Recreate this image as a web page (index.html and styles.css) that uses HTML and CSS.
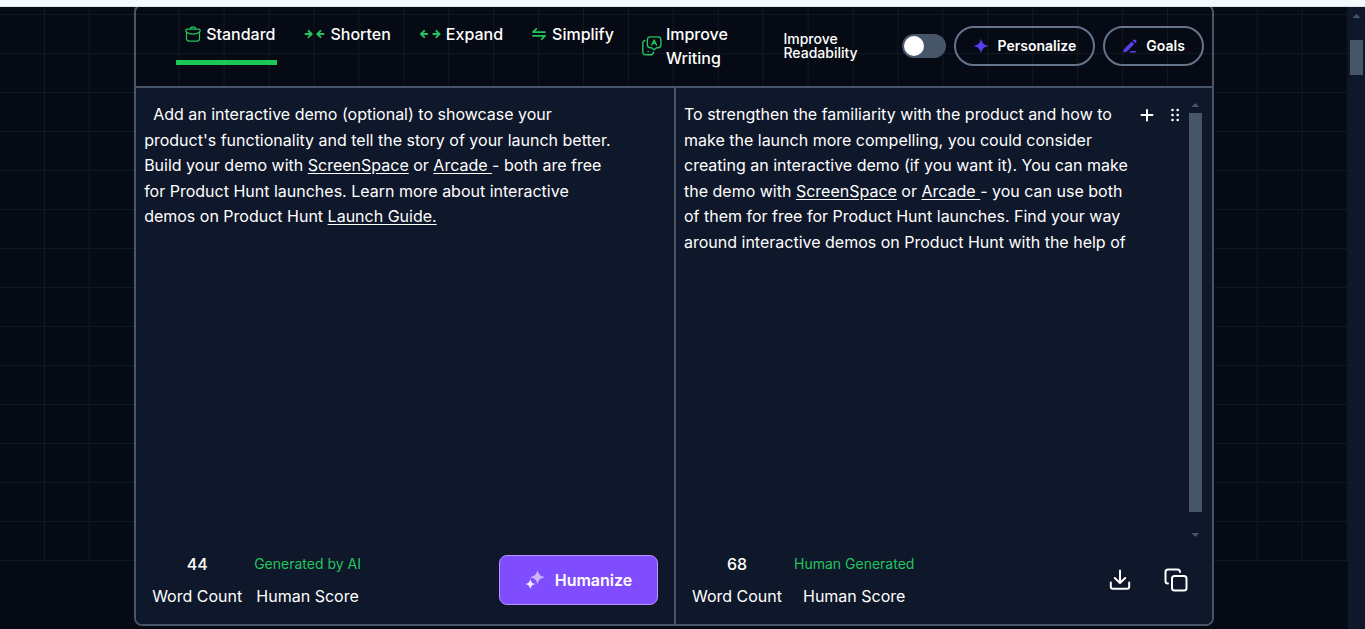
FILE: index.html
```html
<!DOCTYPE html>
<html lang="en">
<head>
<meta charset="utf-8">
<meta name="viewport" content="width=device-width, initial-scale=1">
<title>Humanize</title>
<link rel="stylesheet" href="styles.css">
</head>
<body>
<div class="top-strip"></div>
<div class="viewport">
  <main class="page">
    <section class="editor">
      <header class="toolbar">
        <nav class="tabs" aria-label="Rewrite mode">
          <button class="tab tab-active" type="button">
            <svg width="16" height="16" viewBox="0 0 16 16" fill="none" stroke="currentColor" stroke-width="1.2" stroke-linecap="round" stroke-linejoin="round"><path d="M5.400 3C5.400 1.400 6.300.8 8 .8s2.600.6 2.600 2.200"/><path d="M2.200 3.200h11.600c.9 0 1.400.5 1.400 1.300 0 .7-.3 1.200-.8 1.500C11.500 8.700 4.500 8.700 1.600 6 1.100 5.700.8 5.200.8 4.500c0-.8.500-1.300 1.400-1.300Z"/><path d="M1.500 6.300v6.100c0 1.800 1 2.700 2.900 2.700h7.200c1.900 0 2.900-.9 2.900-2.700V6.300"/></svg>
            <span>Standard</span>
          </button>
          <button class="tab" type="button">
            <svg width="21" height="10" viewBox="0 0 21 10" fill="none" stroke="currentColor" stroke-width="1.900" stroke-linecap="round" stroke-linejoin="round"><path d="M1.500 5h6M4.500 1.800 7.700 5 4.500 8.200M19.500 5h-6M16.500 1.800 13.300 5l3.200 3.200"/></svg>
            <span>Shorten</span>
          </button>
          <button class="tab" type="button">
            <svg width="21" height="10" viewBox="0 0 21 10" fill="none" stroke="currentColor" stroke-width="1.900" stroke-linecap="round" stroke-linejoin="round"><path d="M7.200 5h-6M4.200 1.800 1 5l3.200 3.200M13.300 5h6M16.300 1.800 19.500 5l-3.200 3.200"/></svg>
            <span>Expand</span>
          </button>
          <button class="tab tab-tight" type="button">
            <svg width="14" height="12" viewBox="0 0 14 12" fill="none" stroke="currentColor" stroke-width="1.700" stroke-linecap="round" stroke-linejoin="round"><path d="M4.300.9 1 4.100h12M9.700 11.100 13 7.900H1"/></svg>
            <span>Simplify</span>
          </button>
          <button class="tab tab-wrap" type="button">
            <svg width="20" height="20" viewBox="0 0 20 20" fill="none" stroke="currentColor" stroke-width="1.400" stroke-linecap="round" stroke-linejoin="round"><path d="M8.400.9h7.500c2 0 3 1 3 3v4.900c0 2-1 3-3 3h-1.300l-2.500 2-2.500-2H8.400c-2 0-3-1-3-3V3.900c0-2 1-3 3-3Z"/><path d="M3 4.600c-1.500.2-2.200 1.100-2.200 2.700v8.200c0 2.200 1 3.300 3.200 3.300h4.300c2 0 3-.8 3.200-2.500M6 15.700h.2"/><path d="m9.800 9 2.300-5 2.300 5M10.700 7.300h2.800"/></svg>
            <span>Improve<br>Writing</span>
          </button>
        </nav>
        <div class="controls">
          <label class="toggle-label" for="readability">Improve<br>Readability</label>
          <input class="toggle" id="readability" type="checkbox" role="switch">
          <button class="pill" type="button">
            <svg width="16" height="16" viewBox="0 0 16 16" fill="currentColor"><path d="M8 .3C8.900 5 10.500 7.100 15.700 8 10.500 8.900 8.900 11 8 15.700 7.100 11 5.500 8.900.3 8 5.500 7.100 7.100 5 8 .3Z"/></svg>
            <span>Personalize</span>
          </button>
          <button class="pill" type="button">
            <svg width="16" height="16" viewBox="0 0 16 16" fill="currentColor"><path d="M9.700 3.400 12.300 6 5.200 13.300c-.9.700-2.700 1.100-3.600 1.100-.3 0-.4-.2-.3-.5.200-1.300.6-2.700 1.300-3.500ZM10.600 2.500c1.200-1.300 2.300-1.400 3.300-.4s.9 2.100-.7 3.100ZM8.600 12.900h5c1 0 1 1.600 0 1.600H7.200Z"/></svg>
            <span>Goals</span>
          </button>
        </div>
      </header>
      <div class="panes">
        <section class="pane">
          <div class="content">
            <p class="copy copy-source">&nbsp;&nbsp;Add an interactive demo (optional) to showcase your product's functionality and tell the story of your launch better. Build your demo with <a href="#">ScreenSpace</a> or <a href="#">Arcade </a>- both are free for Product Hunt launches. Learn more about interactive demos on Product Hunt <a href="#">Launch Guide.</a></p>
          </div>
          <footer class="summary">
            <div class="stat"><span class="count">44</span><span>Word Count</span></div>
            <div class="stat"><span class="verdict">Generated by AI</span><span>Human Score</span></div>
            <button class="humanize" type="button">
              <svg width="20" height="20" viewBox="0 0 20 20" fill="currentColor"><path opacity=".65" d="M12.500 0c.9 4.400 2.700 6.200 7.500 7.200-4.800 1-6.600 2.800-7.500 7.300-.9-4.500-2.800-6.300-7.300-7.300C9.700 6.200 11.600 4.400 12.500 0Z"/><path d="M5.300 8.500c.6 3.600 1.800 4.900 5.500 5.600-3.700.7-4.900 2-5.500 5.500C4.700 16.100 3.500 14.800 0 14.100c3.500-.7 4.700-2 5.300-5.600Z"/></svg>
              <span>Humanize</span>
            </button>
          </footer>
        </section>
        <section class="pane">
          <div class="content">
            <p class="copy">To strengthen the familiarity with the product and how to make the launch more compelling, you could consider creating an interactive demo (if you want it). You can make the demo with <a href="#">ScreenSpace</a> or <a href="#">Arcade </a>- you can use both of them for free for Product Hunt launches. Find your way around interactive demos on Product Hunt with the help of</p>
            <div class="tools">
              <button class="icon-button" type="button" aria-label="Add">
                <svg width="14" height="14" viewBox="0 0 14 14" stroke="currentColor" stroke-width="2" stroke-linecap="round"><path d="M7 2v10.500M1.500 7h11"/></svg>
              </button>
              <button class="icon-button" type="button" aria-label="More">
                <svg width="14" height="14" viewBox="0 0 14 14" fill="currentColor"><circle cx="4.500" cy="2" r="1.300"/><circle cx="9.700" cy="2" r="1.300"/><circle cx="4.500" cy="7" r="1.300"/><circle cx="9.700" cy="7" r="1.300"/><circle cx="4.500" cy="12" r="1.300"/><circle cx="9.700" cy="12" r="1.300"/></svg>
              </button>
            </div>
            <div class="scroll" aria-hidden="true"><i class="arrow-up"></i><i class="thumb"></i><i class="arrow-down"></i></div>
          </div>
          <footer class="summary">
            <div class="stat"><span class="count">68</span><span>Word Count</span></div>
            <div class="stat"><span class="verdict">Human Generated</span><span>Human Score</span></div>
            <div class="actions">
              <button class="icon-button" type="button" aria-label="Download">
                <svg width="24" height="24" viewBox="0 0 24 24" fill="none" stroke="currentColor" stroke-width="2" stroke-linecap="round" stroke-linejoin="round"><path d="M2.800 14.500v4c0 1.600.7 2.200 2.200 2.200h14c1.500 0 2.200-.6 2.200-2.200v-4M12 2.500v12M6.800 10l5.200 5 5.200-5"/></svg>
              </button>
              <button class="icon-button" type="button" aria-label="Copy">
                <svg width="24" height="24" viewBox="0 0 24 24" fill="none" stroke="currentColor" stroke-width="2" stroke-linecap="round" stroke-linejoin="round"><rect x="8" y="8" width="14.500" height="14.500" rx="2.500"/><path d="M4 15.500c-1.500 0-2.500-1-2.500-2.500V4C1.500 2.500 2.500 1.500 4 1.500h9.500c1.500 0 2.500 1 2.500 2.500"/></svg>
              </button>
            </div>
          </footer>
        </section>
      </div>
    </section>
  </main>
  <div class="page-scroll" aria-hidden="true"><i class="arrow-up"></i><i class="page-thumb"></i></div>
</div>
</body>
</html>
```

FILE: styles.css
```css
* {
  box-sizing: border-box;
}

body {
  margin: 0;
  min-height: 100vh;
  display: flex;
  flex-direction: column;
  overflow: hidden;
  background: #060a14;
  color: #ffffff;
  font: 400 16px/24px Inter, "Liberation Sans", sans-serif;
}

button {
  border: 0;
  padding: 0;
  background: none;
  color: inherit;
  font: inherit;
  cursor: pointer;
}

svg {
  display: block;
  flex: none;
}

a {
  color: inherit;
  text-underline-offset: 2px;
}

.top-strip {
  height: 7px;
  background: #f3f9fe;
  border-bottom: 1px solid #dbe5ec;
}

.viewport {
  flex: 1;
  display: flex;
}

.page {
  flex: 1;
  overflow: hidden;
  background-image:
    linear-gradient(to left, #10191f 1px, transparent 1px),
    linear-gradient(to top, #10191f 1px, transparent 1px);
  background-size: calc(100% / 30) 555px, 100% 39px;
  background-position: 0 0, 0 8px;
  background-repeat: repeat-x, repeat-y;
  position: relative;
}

/* Ends the grid under its last row. */
.page::after {
  content: "";
  position: absolute;
  inset: 555px 0 0;
  background: #060a14;
}

.editor {
  position: relative;
  z-index: 1;
  width: 80.1%;
  margin: -3px auto 0;
  border: 2px solid #475569;
  border-radius: 8px;
}

.toolbar {
  display: flex;
  justify-content: space-between;
  min-height: 80px;
  padding: 0 8px 0 40px;
}

.tabs {
  display: flex;
  align-items: flex-start;
  gap: 18px;
  padding-top: 16px;
}

.tab {
  display: flex;
  align-items: center;
  gap: 5px;
  padding: 0 2px 14px 9px;
  border-bottom: 5px solid transparent;
  font-weight: 500;
  text-align: left;
}

.tab svg {
  color: #22c55e;
}

.tab-active {
  border-bottom-color: #1dc756;
}

.tab-tight {
  gap: 6px;
}

.tab-wrap {
  gap: 4px;
  padding: 0 2px 0 8px;
  border-bottom: 0;
}

.controls {
  display: flex;
  align-items: center;
  gap: 8px;
}

.toggle-label {
  width: 111px;
  font-size: 14px;
  font-weight: 500;
  line-height: 14px;
}

.toggle {
  appearance: none;
  width: 44px;
  height: 24px;
  margin: 0;
  padding: 2px;
  border-radius: 12px;
  background: #475569;
}

.toggle::before {
  content: "";
  display: block;
  width: 20px;
  height: 20px;
  border-radius: 50%;
  background: #ffffff;
}

.toggle:checked::before {
  margin-left: auto;
}

.pill {
  display: flex;
  align-items: center;
  gap: 8px;
  height: 40px;
  padding: 0 17px;
  border: 2px solid #64748b;
  border-radius: 20px;
  font-size: 14px;
  font-weight: 600;
}

.pill svg {
  color: #5b3df0;
}

.panes {
  display: grid;
  grid-template-columns: 1fr 1fr;
  border-top: 2px solid #475569;
}

.pane {
  display: flex;
  flex-direction: column;
  min-height: 536px;
  background: #0f172a;
}

.pane + .pane {
  border-left: 2px solid #475569;
}

.pane:first-child {
  border-bottom-left-radius: 6px;
}

.pane:last-child {
  border-bottom-right-radius: 6px;
}

.content {
  flex: 1;
  display: flex;
  padding: 14px 8px 0;
}

.copy {
  flex: 1;
  margin: 0;
  line-height: 1.6;
}

.copy-source {
  max-width: 472px;
}

.tools {
  display: flex;
  align-items: flex-start;
  gap: 14px;
  padding: 6px 7px 0 8px;
}

.icon-button {
  display: block;
}

.scroll {
  display: flex;
  flex-direction: column;
  align-items: center;
  width: 13px;
  margin-right: 2px;
}

.arrow-up,
.arrow-down {
  width: 8px;
  height: 4px;
  background: #475569;
}

.arrow-up {
  clip-path: polygon(50% 0, 100% 100%, 0 100%);
}

.arrow-down {
  clip-path: polygon(0 0, 100% 0, 50% 100%);
}

.scroll .arrow-up {
  margin-top: 1px;
}

.thumb {
  flex: 1;
  width: 13px;
  margin: 6px 0 21px;
  background: #475569;
}

.scroll .arrow-down {
  margin-bottom: 11px;
}

.summary {
  display: flex;
  align-items: flex-start;
  gap: 12px;
  padding: 0 16px 12px;
}

.stat {
  display: flex;
  flex-direction: column;
  align-items: center;
  line-height: 32px;
}

.count {
  font-weight: 500;
}

.verdict {
  font-size: 14px;
  color: #22c55e;
}

.humanize {
  display: flex;
  align-items: center;
  justify-content: center;
  gap: 10px;
  width: 159px;
  height: 50px;
  margin: 7px 0 0 auto;
  border: 1px solid #b794ff;
  border-radius: 8px;
  background: #7f4dfd;
  font-weight: 600;
}

.humanize svg {
  color: #f3ecff;
}

.actions {
  display: flex;
  gap: 32px;
  margin: 20px 8px 0 auto;
}

.page-scroll {
  display: flex;
  flex-direction: column;
  align-items: center;
  width: 17px;
  padding-top: 7px;
  background: #0f172a;
}

.page-thumb {
  width: 13px;
  height: 35px;
  margin-top: 22px;
  background: #475569;
}
```
